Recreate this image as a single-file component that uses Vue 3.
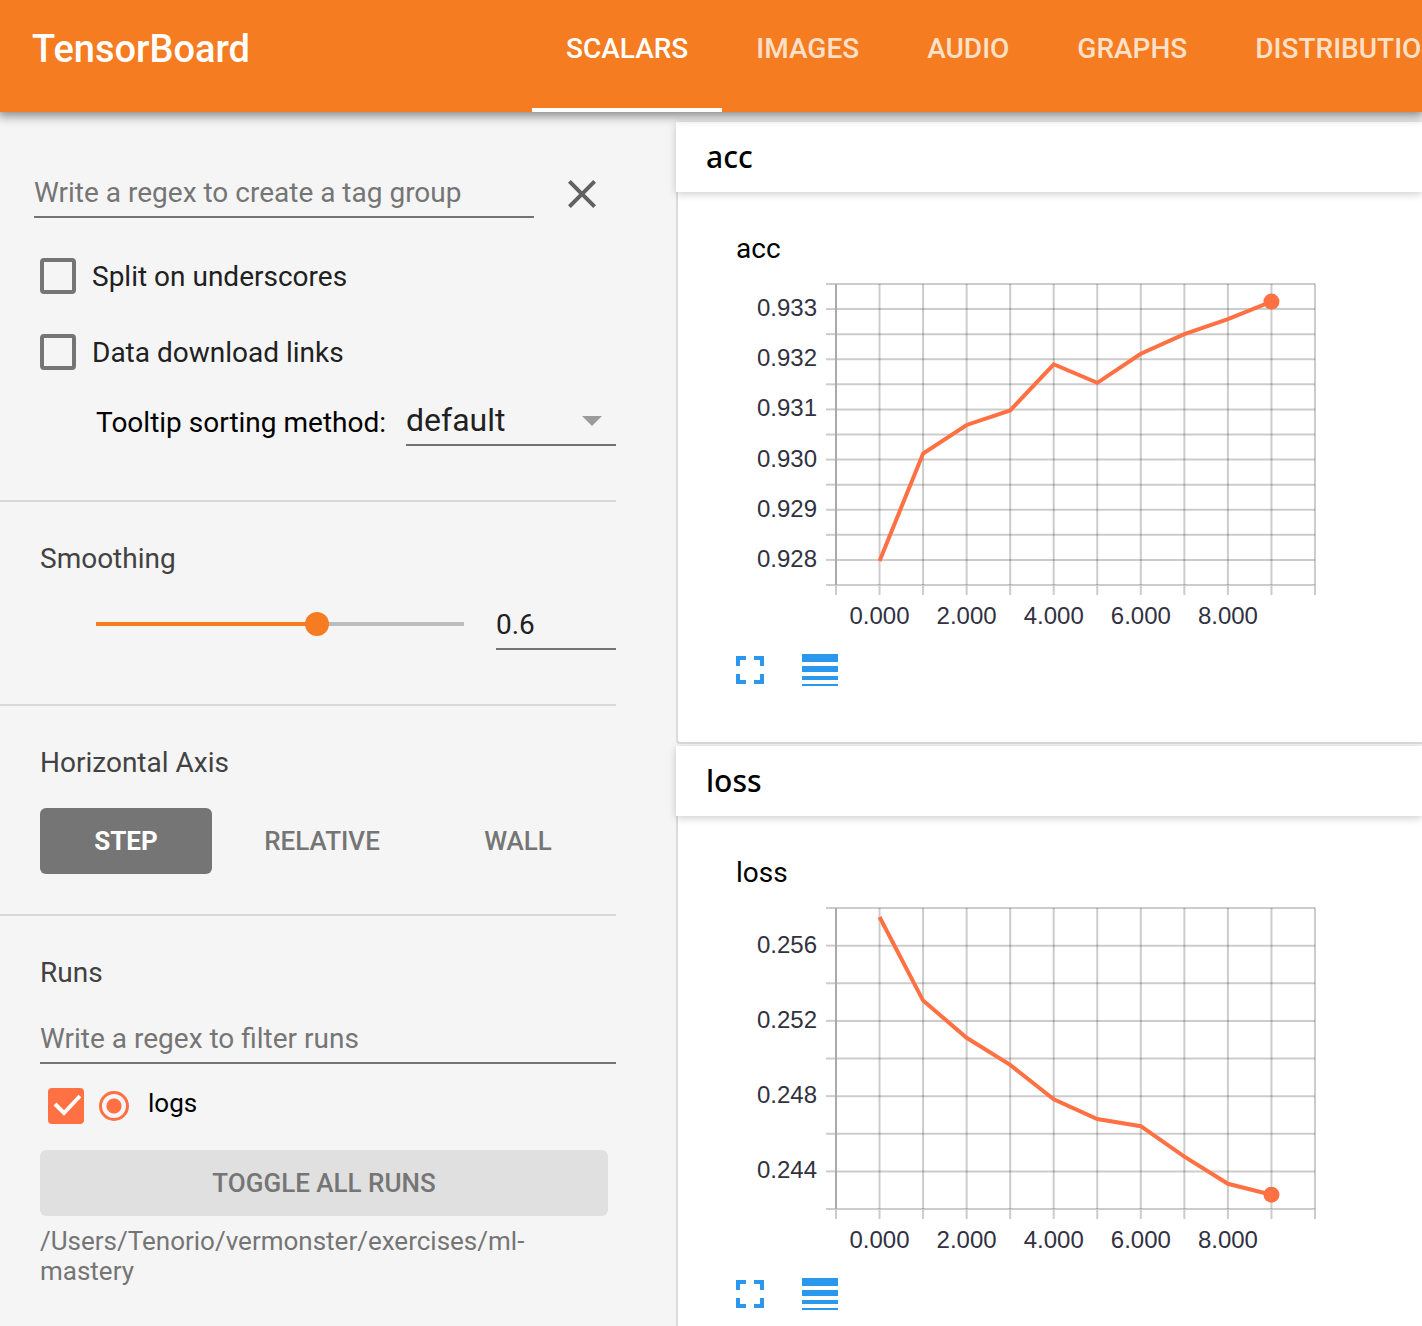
<script setup>
import { ref } from 'vue'

const tabs = ['SCALARS', 'IMAGES', 'AUDIO', 'GRAPHS', 'DISTRIBUTIONS']
const activeTab = ref('SCALARS')

const tagFilter = ref('')
const splitOnUnderscores = ref(false)
const downloadLinks = ref(false)
const sortMethod = ref('default')
const smoothing = ref(0.6)
const axes = ['STEP', 'RELATIVE', 'WALL']
const activeAxis = ref('STEP')
const runFilter = ref('')
const logsChecked = ref(true)
const selectedRun = ref('logs')

// Plot area inside the chart's own coordinate system
const plot = { left: 100, right: 579, top: 14, bottom: 315 }

function buildChart(name, min, max, tickStep, labels, values) {
  const xAt = (step) => plot.left + ((step + 1) * (plot.right - plot.left)) / 11
  const yAt = (v) => plot.bottom - ((v - min) / (max - min)) * (plot.bottom - plot.top)
  const rows = Math.round((max - min) / tickStep)
  const last = values.length - 1
  return {
    name,
    xLines: Array.from({ length: 11 }, (_, i) => xAt(i)),
    yLines: Array.from({ length: rows + 1 }, (_, i) => yAt(min + i * tickStep)),
    xLabels: [0, 2, 4, 6, 8].map((s) => ({ x: xAt(s), text: s.toFixed(3) })),
    yLabels: labels.map((v) => ({ y: yAt(v) + 7, text: v.toFixed(3) })),
    points: values.map((v, i) => `${xAt(i)},${yAt(v)}`).join(' '),
    end: { x: xAt(last), y: yAt(values[last]) }
  }
}

const charts = [
  buildChart('acc', 0.9275, 0.9335, 0.0005,
    [0.933, 0.932, 0.931, 0.93, 0.929, 0.928],
    [0.92798, 0.93012, 0.93069, 0.93098, 0.9319, 0.93153, 0.93211, 0.9325, 0.9328, 0.93315]),
  buildChart('loss', 0.242, 0.258, 0.002,
    [0.256, 0.252, 0.248, 0.244],
    [0.25752, 0.25308, 0.2511, 0.24966, 0.24783, 0.24678, 0.2464, 0.24478, 0.24334, 0.24276])
]
</script>

<template>
  <div class="app">
    <header class="toolbar">
      <h1 class="brand">TensorBoard</h1>
      <nav class="tabs">
        <a
          v-for="tab in tabs"
          :key="tab"
          href="#"
          class="tab"
          :class="{ active: tab === activeTab }"
          @click.prevent="activeTab = tab"
        >{{ tab }}</a>
      </nav>
    </header>

    <div class="content">
      <aside class="sidebar">
        <section class="group options">
          <div class="tag-row">
            <input v-model="tagFilter" class="field" type="text" aria-label="Tag group regex" placeholder="Write a regex to create a tag group" />
            <button class="clear" type="button" aria-label="Clear" @click="tagFilter = ''">
              <svg viewBox="0 0 24 24"><path d="M19 6.41L17.59 5 12 10.59 6.41 5 5 6.41 10.59 12 5 17.59 6.41 19 12 13.41 17.59 19 19 17.59 13.41 12z" /></svg>
            </button>
          </div>
          <label class="check-row">
            <input v-model="splitOnUnderscores" class="box" type="checkbox" />
            <span>Split on underscores</span>
          </label>
          <label class="check-row">
            <input v-model="downloadLinks" class="box" type="checkbox" />
            <span>Data download links</span>
          </label>
          <div class="sort-row">
            <label for="sort">Tooltip sorting method:</label>
            <div class="select">
              <select id="sort" v-model="sortMethod" class="field">
                <option>default</option>
                <option>descending</option>
                <option>ascending</option>
                <option>nearest</option>
              </select>
              <svg class="arrow" viewBox="0 0 20 10"><path d="M0 0h20L10 10z" /></svg>
            </div>
          </div>
        </section>

        <section class="group">
          <h2><label for="smoothing">Smoothing</label></h2>
          <div class="smooth-row">
            <input
              id="smoothing"
              v-model="smoothing"
              class="slider"
              type="range"
              min="0"
              max="1"
              step="0.01"
              :style="{ '--fill': smoothing * 100 + '%' }"
            />
            <input v-model="smoothing" class="field" type="text" aria-label="Smoothing value" />
          </div>
        </section>

        <section class="group axis">
          <h2>Horizontal Axis</h2>
          <div class="axis-row">
            <button
              v-for="axis in axes"
              :key="axis"
              type="button"
              class="btn"
              :class="{ selected: axis === activeAxis }"
              @click="activeAxis = axis"
            >{{ axis }}</button>
          </div>
        </section>

        <section class="group runs">
          <h2>Runs</h2>
          <input v-model="runFilter" class="field" type="text" aria-label="Run filter regex" placeholder="Write a regex to filter runs" />
          <div class="run">
            <span class="stack">
              <input id="run-logs" v-model="logsChecked" class="box colored" type="checkbox" />
              <svg v-if="logsChecked" class="tick" viewBox="0 0 36 36"><path d="M7 16l9 9L32 8" /></svg>
            </span>
            <input v-model="selectedRun" class="radio" type="radio" name="run" value="logs" aria-label="Show only logs" />
            <label for="run-logs">logs</label>
          </div>
          <button class="btn toggle" type="button" @click="logsChecked = !logsChecked">TOGGLE ALL RUNS</button>
          <p class="path">/Users/Tenorio/vermonster/exercises/ml-mastery</p>
        </section>
      </aside>

      <main class="panes">
        <section v-for="chart in charts" :key="chart.name" class="pane">
          <h2 class="pane-head">{{ chart.name }}</h2>
          <div class="pane-body">
            <h3>{{ chart.name }}</h3>
            <svg class="chart" width="600" height="376" viewBox="0 0 600 376">
              <g class="grid">
                <line v-for="x in chart.xLines" :key="'x' + x" :x1="x" :x2="x" :y1="plot.top" :y2="plot.bottom" />
                <line v-for="y in chart.yLines" :key="'y' + y" :x1="plot.left" :x2="plot.right" :y1="y" :y2="y" />
              </g>
              <g class="ticks">
                <line :x1="plot.left" :x2="plot.left" :y1="plot.bottom" :y2="plot.bottom + 10" />
                <line v-for="x in chart.xLines" :key="'tx' + x" :x1="x" :x2="x" :y1="plot.bottom" :y2="plot.bottom + 10" />
                <line v-for="y in chart.yLines" :key="'ty' + y" :x1="plot.left - 10" :x2="plot.left" :y1="y" :y2="y" />
              </g>
              <line class="axis-line" :x1="plot.left" :x2="plot.left" :y1="plot.top" :y2="plot.bottom" />
              <g class="labels">
                <text v-for="l in chart.yLabels" :key="l.text" x="81" :y="l.y" text-anchor="end">{{ l.text }}</text>
                <text v-for="l in chart.xLabels" :key="l.text" :x="l.x" y="354" text-anchor="middle">{{ l.text }}</text>
              </g>
              <polyline class="series" :points="chart.points" />
              <circle class="dot" :cx="chart.end.x" :cy="chart.end.y" r="8" />
            </svg>
            <div class="actions">
              <button type="button" aria-label="Expand chart">
                <svg viewBox="0 0 24 24"><path d="M7 14H5v5h5v-2H7v-3zm-2-4h2V7h3V5H5v5zm12 7h-3v2h5v-5h-2v3zM14 5v2h3v3h2V5h-5z" /></svg>
              </button>
              <button type="button" aria-label="Toggle log scale">
                <svg viewBox="0 0 24 24"><path d="M3 17h18v-2H3v2zm0 3h18v-1H3v1zm0-7h18v-3H3v3zm0-9v4h18V4H3z" /></svg>
              </button>
            </div>
          </div>
        </section>
      </main>
    </div>
  </div>
</template>

<style>
body {
  margin: 0;
  background: #f5f5f5;
}
</style>

<style scoped>
.app {
  display: flex;
  flex-direction: column;
  height: 100vh;
  overflow: hidden;
  font: 400 28px/40px Roboto, sans-serif;
  color: #212121;
  background: #f5f5f5;
}
h1, h2, h3, p {
  margin: 0;
  font-weight: 400;
}
button, input, select {
  margin: 0;
  padding: 0;
  border: 0;
  border-radius: 0;
  background: none;
  font: inherit;
  color: inherit;
  appearance: none;
  outline: none;
  box-sizing: border-box;
}
button {
  cursor: pointer;
}
svg {
  display: block;
}

/* Toolbar */
.toolbar {
  position: relative;
  z-index: 3;
  flex: none;
  display: flex;
  height: 112px;
  background: #f57c20;
  box-shadow: 0 2px 10px 2px rgba(0, 0, 0, 0.45);
}
.brand {
  flex: none;
  box-sizing: border-box;
  width: 532px;
  padding-left: 32px;
  font-size: 38px;
  line-height: 98px;
  font-weight: 500;
  color: #fff;
}
.tabs {
  flex: 1;
  min-width: 0;
  display: flex;
  overflow: hidden;
}
.tab {
  flex: none;
  box-sizing: border-box;
  height: 112px;
  padding: 0 34px;
  border-bottom: 4px solid transparent;
  font-size: 28px;
  line-height: 98px;
  font-weight: 500;
  color: #fde0c8;
  text-decoration: none;
  white-space: nowrap;
}
.tab.active {
  color: #fff;
  border-color: #fff;
}

/* Sidebar */
.content {
  flex: 1;
  min-height: 0;
  display: flex;
  overflow: auto;
  scrollbar-width: none;
}
.sidebar {
  flex: none;
  width: 616px;
  margin-right: 60px;
}
.group {
  padding: 36px 0 54px 40px;
  border-bottom: 2px solid #d8d8d8;
}
.group h2 {
  margin-bottom: 24px;
  font-size: 28px;
  line-height: 42px;
  color: #424242;
}
.field {
  display: block;
  width: 100%;
  height: 46px;
  padding-bottom: 4px;
  border-bottom: 2px solid #737373;
}
.field::placeholder {
  color: #757575;
  opacity: 1;
}
.options {
  padding-top: 60px;
}
.tag-row {
  display: flex;
  gap: 24px;
  margin-left: -6px;
}
.tag-row .field {
  flex: none;
  width: 500px;
}
.clear {
  display: grid;
  place-content: center;
  width: 48px;
  height: 44px;
  color: #616161;
}
.clear svg,
.actions svg {
  width: 48px;
  height: 48px;
  fill: currentColor;
}
.check-row {
  display: flex;
  align-items: center;
  gap: 16px;
  height: 36px;
  margin-top: 40px;
}
.check-row span {
  padding-top: 2px;
}
.box {
  flex: none;
  display: block;
  width: 36px;
  height: 36px;
  border: 4px solid #757575;
  border-radius: 4px;
}
.box:checked {
  background: #757575;
}
.sort-row {
  display: flex;
  align-items: center;
  justify-content: flex-end;
  gap: 20px;
  margin-top: 30px;
  color: #000;
}
.select {
  display: grid;
  align-items: center;
  width: 210px;
  color: #212121;
}
.select .field,
.select .arrow {
  grid-area: 1 / 1;
}
.select .field {
  padding-bottom: 6px;
  font-size: 32px;
}
.arrow {
  justify-self: end;
  width: 20px;
  height: 10px;
  margin: 0 14px 4px 0;
  fill: #9b9b9b;
  pointer-events: none;
}
.smooth-row {
  display: flex;
  gap: 20px;
  margin-left: 44px;
}
.smooth-row .field {
  flex: none;
  width: 120px;
}
.slider {
  flex: 1;
  min-width: 0;
  height: 40px;
}
.slider::-webkit-slider-runnable-track {
  height: 4px;
  background: linear-gradient(
    to right,
    transparent 12px,
    #f57c20 12px,
    #f57c20 var(--fill),
    #bdbdbd var(--fill),
    #bdbdbd calc(100% - 12px),
    transparent calc(100% - 12px)
  );
}
.slider::-webkit-slider-thumb {
  appearance: none;
  width: 24px;
  height: 24px;
  margin-top: -10px;
  border-radius: 50%;
  background: #f57c20;
}
.axis {
  padding-bottom: 40px;
}
.axis-row {
  display: grid;
  grid-template-columns: repeat(3, 1fr);
  gap: 24px;
  padding-right: 12px;
}
.btn {
  height: 66px;
  border-radius: 6px;
  font-size: 26px;
  font-weight: 500;
  color: #757575;
}
.btn.selected {
  background: #757575;
  color: #fff;
  font-weight: 700;
}
.runs {
  border-bottom: 0;
}
.run {
  display: flex;
  padding: 24px 0 26px 8px;
  font-size: 26px;
  line-height: 30px;
  color: #000;
}
.stack {
  display: grid;
}
.stack > * {
  grid-area: 1 / 1;
}
.box.colored {
  border-color: #ff7043;
}
.box.colored:checked {
  background: #ff7043;
}
.tick {
  width: 36px;
  height: 36px;
  fill: none;
  stroke: #fff;
  stroke-width: 4;
  pointer-events: none;
}
.radio {
  align-self: center;
  width: 30px;
  height: 30px;
  margin: 0 19px 0 15px;
  border: 3px solid #ff7043;
  border-radius: 50%;
}
.radio:checked {
  background: radial-gradient(circle, #ff7043 7px, transparent 8px);
}
.btn.toggle {
  display: block;
  width: 568px;
  background: #e0e0e0;
}
.path {
  width: 568px;
  margin-top: 10px;
  font-size: 26px;
  line-height: 30px;
  color: #757575;
}

/* Chart panes */
.panes {
  flex: 1;
  min-width: 0;
  padding-top: 10px;
}
.pane {
  margin-bottom: 2px;
}
.pane-head {
  position: relative;
  z-index: 1;
  padding-left: 30px;
  background: #fff;
  box-shadow: 0 2px 8px rgba(0, 0, 0, 0.2);
  font: 500 30px/70px "Noto Sans", sans-serif;
  color: #000;
}
.pane-body {
  padding: 36px 0 48px 58px;
  border: 2px solid #dcdcdc;
  border-width: 0 0 2px 2px;
  border-radius: 0 0 0 4px;
  background: #fff;
}
.pane-body h3 {
  font-size: 28px;
  line-height: 42px;
  color: #000;
}
.grid line {
  stroke: rgba(0, 0, 0, 0.2);
  stroke-width: 2;
}
.ticks line {
  stroke: #ccc;
  stroke-width: 2;
}
.axis-line {
  stroke: #aaa;
  stroke-width: 2;
}
.labels {
  font: 24px "Liberation Sans", sans-serif;
  fill: #32313f;
}
.series {
  fill: none;
  stroke: #ff7043;
  stroke-width: 4;
}
.dot {
  fill: #ff7043;
}
.actions {
  display: flex;
  gap: 22px;
  margin-left: -10px;
}
.actions button {
  width: 48px;
  height: 48px;
  color: #2b98f0;
}
</style>
